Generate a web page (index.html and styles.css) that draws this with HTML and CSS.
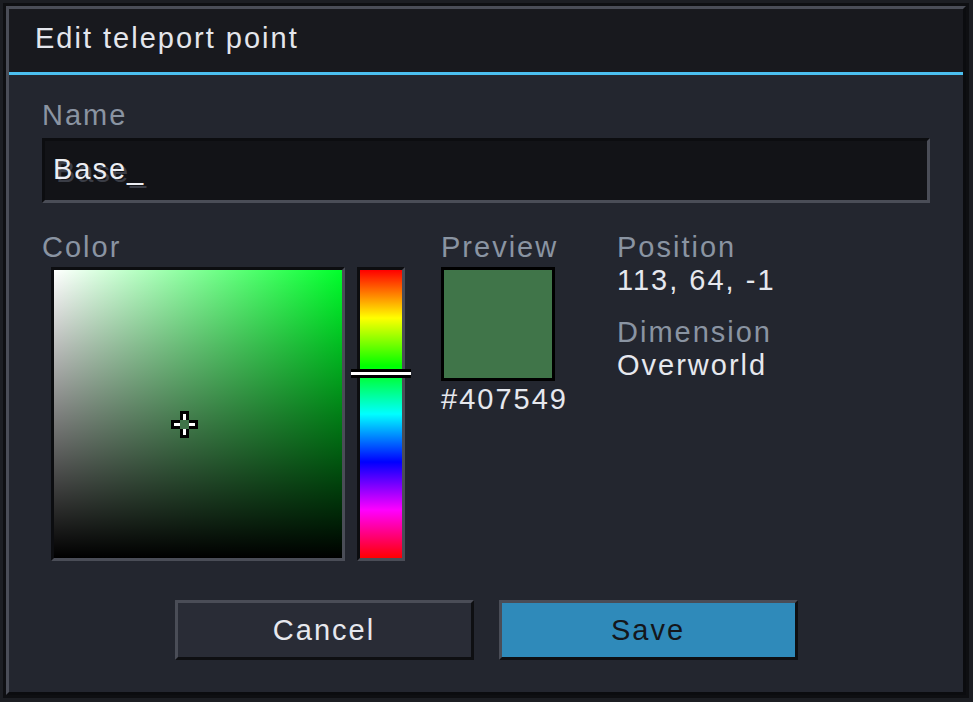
FILE: index.html
```html
<!DOCTYPE html>
<html lang="en">
<head>
  <meta charset="UTF-8" />
  <meta name="viewport" content="width=device-width, initial-scale=1.0" />
  <title>Edit teleport point</title>
  <link rel="stylesheet" href="styles.css">
</head>
<body>

  <div class="dialog">
    <div class="dialog-frame">
      <div class="dialog-header">Edit teleport point</div>

      <div class="dialog-body">
        <div class="field-label">Name</div>
        <div class="text-input"><span>Base</span><span class="caret">_</span></div>

        <div class="editor-row">
          <!-- saturation/value square + hue strip -->
          <div class="color-col">
            <div class="field-label">Color</div>
            <div class="picker">
              <div class="sv-box">
                <svg class="crosshair" style="left: 117px; top: 141px;" width="27" height="27" viewBox="0 0 27 27" shape-rendering="crispEdges">
                  <path d="M9 0h9v9h9v9h-9v9h-9v-9H0V9h9z" fill="#000"/>
                  <rect x="12" y="3" width="3" height="6" fill="#fff"/>
                  <rect x="12" y="18" width="3" height="6" fill="#fff"/>
                  <rect x="3" y="12" width="6" height="3" fill="#fff"/>
                  <rect x="18" y="12" width="6" height="3" fill="#fff"/>
                  <rect x="9" y="9" width="9" height="9" fill="#407549"/>
                </svg>
              </div>
              <div class="hue-bar">
                <div class="hue-handle" style="top: 99px;"></div>
              </div>
            </div>
          </div>

          <div class="preview-col">
            <div class="field-label">Preview</div>
            <div class="swatch" style="background: #407549;"></div>
            <div class="value hex">#407549</div>
          </div>

          <div class="info-col">
            <div class="field-label">Position</div>
            <div class="value">113, 64, -1</div>
            <div class="field-label dim-label">Dimension</div>
            <div class="value">Overworld</div>
          </div>
        </div>

        <div class="actions">
          <button class="btn">Cancel</button>
          <button class="btn btn-primary">Save</button>
        </div>
      </div>
    </div>
  </div>

</body>
</html>
```

FILE: styles.css
```css
body {
  margin: 0;
  padding: 3px;
  background: #1c1e23;
  font-family: 'Liberation Sans', Arial, sans-serif;
  font-size: 29px;
  line-height: 29px;
  letter-spacing: 2px;
  color: #e6e8ee;
}

.dialog {
  width: 966px;
  height: 695px;
  box-sizing: border-box;
  border: 3px solid #0e0f12;
}

.dialog-frame {
  height: 100%;
  box-sizing: border-box;
  border: 3px solid;
  border-color: #4a4d57 #0b0c0f #0b0c0f #4a4d57;
  background: #23262f;
  display: flex;
  flex-direction: column;
}

.dialog-header {
  height: 66px;
  box-sizing: border-box;
  padding: 15px 26px 0;
  background: #18191e;
  border-bottom: 3px solid #4bbff0;
  color: #e4e6ec;
}

.dialog-body {
  padding: 26px 33px 0;
}

.field-label {
  color: #8a94a2;
}

.text-input {
  margin-top: 8px;
  height: 65px;
  box-sizing: border-box;
  padding: 14px 8px 0;
  border: 3px solid;
  border-color: #0c0d10 #4a4d57 #4a4d57 #0c0d10;
  background: #121317;
  color: #eceef3;
  text-shadow: 3px 3px 0 #3a3d46;
}

.editor-row {
  display: flex;
  align-items: flex-start;
  margin-top: 30px;
}

.color-col {
  width: 363px;
}

.picker {
  display: flex;
  gap: 12px;
  margin: 5px 0 0 9px;
}

.sv-box,
.hue-bar {
  position: relative;
  height: 288px;
  border: 3px solid;
  border-color: #0c0d10 #4a4d57 #4a4d57 #0c0d10;
}

.sv-box {
  width: 288px;
  background:
    linear-gradient(to bottom, rgba(0,0,0,0), #000),
    linear-gradient(to right, #fff, #00ff2b);
}

.crosshair {
  position: absolute;
  display: block;
}

.hue-bar {
  width: 42px;
  background: linear-gradient(to bottom, #f00, #ff0 16.67%, #0f0 33.33%, #0ff 50%, #00f 66.67%, #f0f 83.33%, #f00);
}

.hue-handle {
  position: absolute;
  left: -9px;
  width: 60px;
  height: 3px;
  background: #fff;
  border-top: 3px solid #000;
  border-bottom: 3px solid #000;
}

.preview-col {
  width: 140px;
  margin-left: 36px;
}

.swatch {
  width: 108px;
  height: 108px;
  margin-top: 5px;
  border: 3px solid #000;
}

.hex {
  margin-top: 12px;
}

.info-col {
  margin-left: 36px;
}

.value {
  margin-top: 4px;
  color: #e6e8ee;
}

.info-col .dim-label {
  margin-top: 23px;
}

.actions {
  display: flex;
  justify-content: center;
  gap: 25px;
  margin-top: 39px;
}

.btn {
  width: 299px;
  height: 60px;
  box-sizing: border-box;
  padding: 0;
  border: 3px solid;
  border-color: #4a4d57 #0e0f12 #0e0f12 #4a4d57;
  background: #292c36;
  color: #e6e8ee;
  font: inherit;
  letter-spacing: inherit;
  line-height: 54px;
  cursor: pointer;
}

.btn-primary {
  background: #2f8aba;
  color: #14161b;
}
```
